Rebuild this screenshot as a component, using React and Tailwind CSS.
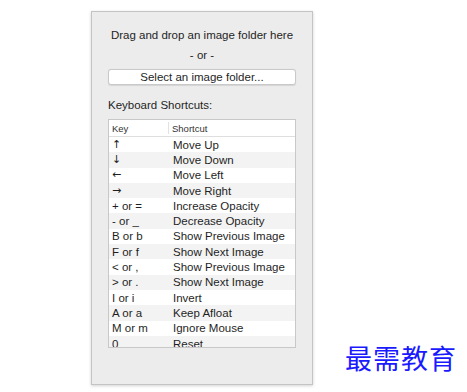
import React from "react";

const rows = [
  ["↑", "Move Up"],
  ["↓", "Move Down"],
  ["←", "Move Left"],
  ["→", "Move Right"],
  ["+ or =", "Increase Opacity"],
  ["- or _", "Decrease Opacity"],
  ["B or b", "Show Previous Image"],
  ["F or f", "Show Next Image"],
  ["< or ,", "Show Previous Image"],
  ["> or .", "Show Next Image"],
  ["I or i", "Invert"],
  ["A or a", "Keep Afloat"],
  ["M or m", "Ignore Mouse"],
  ["0", "Reset"],
];

const isArrow = (k) => k.length === 1 && "↑↓←→".includes(k);

export default function App() {
  return (
    <div className="relative w-[467px] h-[392px] bg-white overflow-hidden" style={{ fontFamily: '"Liberation Sans", Arial, sans-serif' }}>
      <div className="ml-[91px] mt-[11px] w-[222px] h-[374px] bg-[#ececec] border border-[#c4c4c4] shadow-[0_1px_3px_rgba(0,0,0,0.18)] px-4 pt-4 flex flex-col text-[#1f1f1f]">
        <div className="text-[11.5px] leading-[14px] text-center whitespace-nowrap -mx-2">Drag and drop an image folder here</div>
        <div className="text-[11.5px] leading-[14px] text-center mt-[6px]">- or -</div>
        <div className="mt-[7px] h-[16px] bg-white border border-[#c9c9c9] rounded-[3px] text-[11.5px] leading-[14px] text-center shadow-[0_0.5px_1px_rgba(0,0,0,0.1)]">
          Select an image folder...
        </div>
        <div className="text-[11.5px] leading-[14px] mt-[13px]">Keyboard Shortcuts:</div>
        <div className="mt-[7px] h-[229px] bg-white border border-[#c8c8c8] overflow-hidden">
          <div className="flex h-[17px] border-b border-[#dedede] text-[9.5px] text-[#333]">
            <div className="w-[60px] pl-[3px] border-r border-[#e2e2e2] my-[2px] leading-[13px]">Key</div>
            <div className="pl-[3px] my-[2px] leading-[13px]">Shortcut</div>
          </div>
          {rows.map(([k, s], i) => (
            <div key={i} className={`flex h-[15.3px] items-center text-[11.5px] leading-[14px] ${i % 2 === 1 ? "bg-[#f3f3f3]" : "bg-white"}`}>
              <div
                className={`w-[60px] pl-[3px] shrink-0 ${isArrow(k) ? "text-[11px]" : ""}`}
                style={isArrow(k) ? { fontFamily: '"DejaVu Sans", sans-serif' } : undefined}
              >
                {k}
              </div>
              <div className="pl-[4px] whitespace-nowrap">{s}</div>
            </div>
          ))}
        </div>
      </div>
      <div
        className="absolute left-[345px] top-[342px] text-[27px] leading-[32px] text-[#1a1aff] tracking-[1px]"
        style={{ fontFamily: '"Noto Sans CJK SC", sans-serif' }}
      >
        最需教育
      </div>
    </div>
  );
}
